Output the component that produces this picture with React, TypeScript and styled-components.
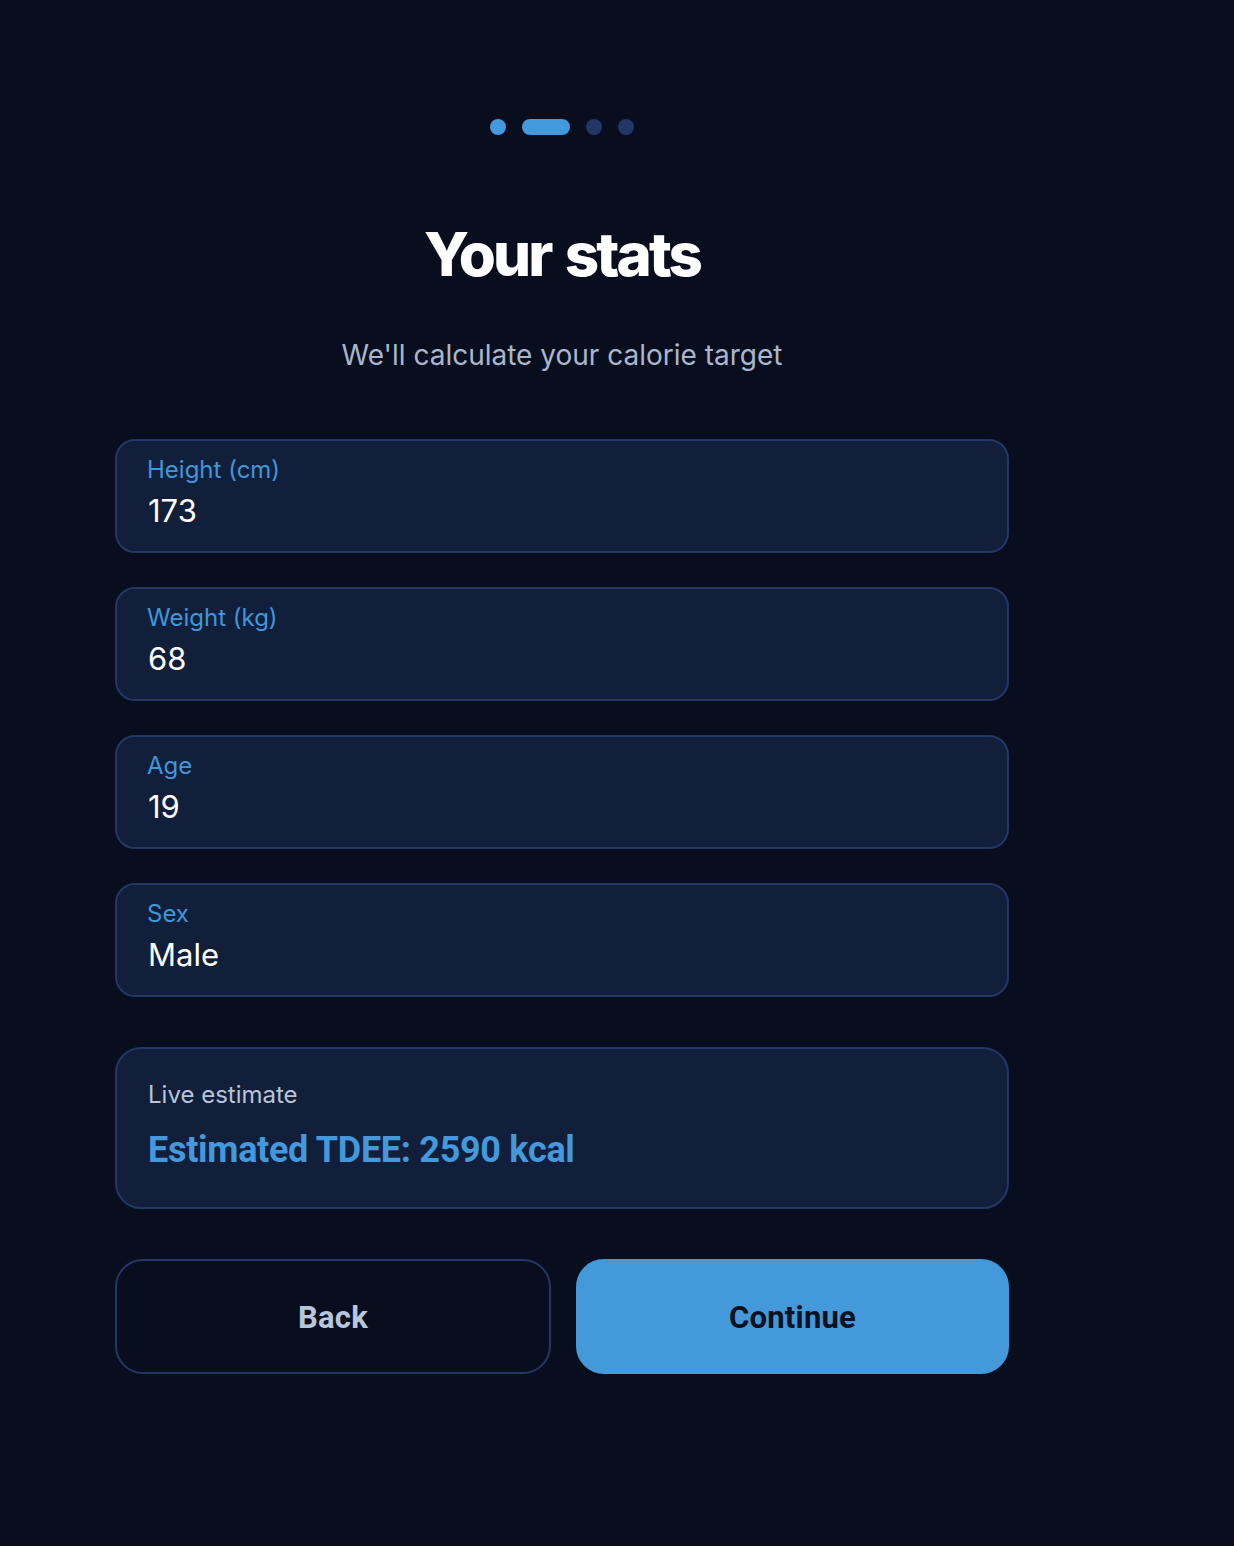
import { createGlobalStyle, styled } from "styled-components";

const GlobalStyle = createGlobalStyle`
	html, body {
		margin: 0;
		padding: 0;
		background-color: #090e1e;
	}
	body {
		font-family: Inter, "Noto Sans", sans-serif;
		min-height: 1546px;
	}
`;

const Page = styled.div`
	width: 1124px;
	box-sizing: border-box;
	padding: 119px 115px 0;
	display: flex;
	flex-direction: column;
`;

const Steps = styled.div`
	display: flex;
	justify-content: center;
	gap: 16px;
`;

const Step = styled.span<{ $active?: boolean; $current?: boolean }>`
	display: block;
	height: 16px;
	width: ${(p) => (p.$current ? "48px" : "16px")};
	border-radius: 8px;
	background-color: ${(p) => (p.$active ? "#4499dd" : "#223668")};
`;

const Title = styled.h1`
	margin: 83px 0 0;
	text-align: center;
	color: #ffffff;
	font-size: 60px;
	line-height: 72px;
	font-weight: 800;
	letter-spacing: -2.9px;
	word-spacing: 4px;
`;

const Subtitle = styled.p`
	margin: 47px 0 0;
	text-align: center;
	color: #a9b6cd;
	font-size: 28px;
	line-height: 36px;
	font-weight: 400;
`;

const Fields = styled.div`
	margin-top: 66px;
	display: flex;
	flex-direction: column;
	gap: 34px;
`;

const Field = styled.label`
	box-sizing: border-box;
	height: 114px;
	display: flex;
	flex-direction: column;
	gap: 8px;
	padding: 14px 30px 0;
	background-color: #121f3b;
	border: 2px solid #223668;
	border-radius: 20px;

	span {
		color: #3f97db;
		font-size: 24px;
		line-height: 29px;
	}
	div {
		color: #ffffff;
		font-size: 31px;
		line-height: 38px;
		padding-left: 1px;
	}
`;

const Estimate = styled.div`
	box-sizing: border-box;
	margin-top: 50px;
	height: 162px;
	display: flex;
	flex-direction: column;
	gap: 20px;
	padding: 31px 31px 0;
	background-color: #121f3b;
	border: 2px solid #223668;
	border-radius: 26px;

	.caption {
		color: #b8c4d8;
		font-size: 24px;
		line-height: 29px;
	}
	.value {
		color: #4499dd;
		font-family: Roboto, Inter, sans-serif;
		font-size: 36px;
		line-height: 42px;
		font-weight: 700;
		letter-spacing: -0.3px;
	}
`;

const Actions = styled.div`
	margin-top: 50px;
	display: grid;
	grid-template-columns: 436px 1fr;
	gap: 25px;
`;

const Button = styled.button<{ $primary?: boolean }>`
	height: 115px;
	border-radius: 28px;
	border: 2px solid ${(p) => (p.$primary ? "#4499da" : "#223668")};
	background-color: ${(p) => (p.$primary ? "#4499da" : "transparent")};
	color: ${(p) => (p.$primary ? "#0a1122" : "#b8c6db")};
	font-family: Roboto, Inter, sans-serif;
	font-size: 31px;
	font-weight: 700;
	letter-spacing: 0.2px;
	padding-top: 2px;
	cursor: pointer;
`;

const stats = [
	{ label: "Height (cm)", value: "173" },
	{ label: "Weight (kg)", value: "68" },
	{ label: "Age", value: "19" },
	{ label: "Sex", value: "Male" },
];

const App = () => {
	return (
		<>
			<GlobalStyle />
			<Page>
				<Steps>
					<Step $active />
					<Step $active $current />
					<Step />
					<Step />
				</Steps>
				<Title>Your stats</Title>
				<Subtitle>We'll calculate your calorie target</Subtitle>
				<Fields>
					{stats.map((s) => (
						<Field key={s.label}>
							<span>{s.label}</span>
							<div>{s.value}</div>
						</Field>
					))}
				</Fields>
				<Estimate>
					<div className="caption">Live estimate</div>
					<div className="value">Estimated TDEE: 2590 kcal</div>
				</Estimate>
				<Actions>
					<Button>Back</Button>
					<Button $primary>Continue</Button>
				</Actions>
			</Page>
		</>
	);
};

export default App;
